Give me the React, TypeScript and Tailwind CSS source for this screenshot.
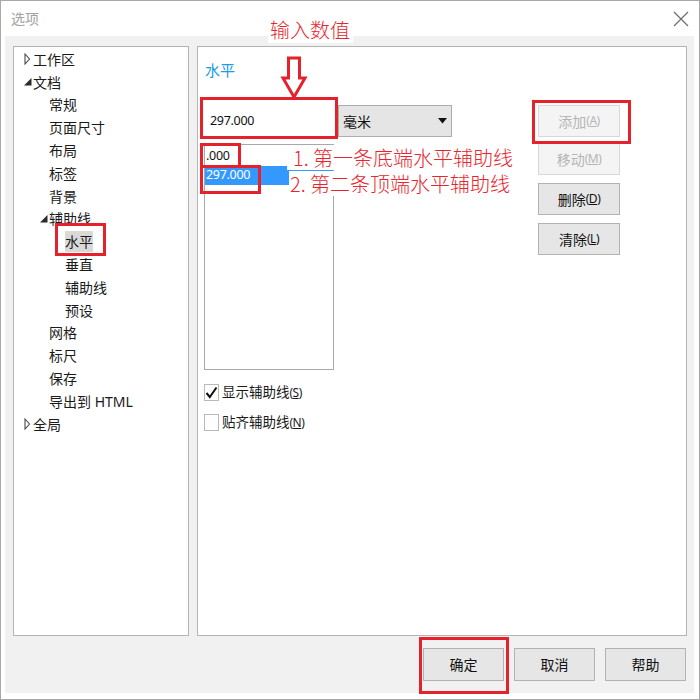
import React from 'react';

type TreeNode = {
  label: string;
  level: 0 | 1 | 2;
  icon?: 'closed' | 'open';
  selected?: boolean;
};

const tree: TreeNode[] = [
  { label: '工作区', level: 0, icon: 'closed' },
  { label: '文档', level: 0, icon: 'open' },
  { label: '常规', level: 1 },
  { label: '页面尺寸', level: 1 },
  { label: '布局', level: 1 },
  { label: '标签', level: 1 },
  { label: '背景', level: 1 },
  { label: '辅助线', level: 1, icon: 'open' },
  { label: '水平', level: 2, selected: true },
  { label: '垂直', level: 2 },
  { label: '辅助线', level: 2 },
  { label: '预设', level: 2 },
  { label: '网格', level: 1 },
  { label: '标尺', level: 1 },
  { label: '保存', level: 1 },
  { label: '导出到 HTML', level: 1 },
  { label: '全局', level: 0, icon: 'closed' },
];

const indent = ['pl-[10px]', 'pl-[26px]', 'pl-[42px]'];

const TreeIcon = ({ kind }: { kind?: 'closed' | 'open' }) => (
  <span className="w-[9px] h-[12px] flex items-center">
    {kind === 'closed' && (
      <svg width="7" height="12" viewBox="0 0 7 12">
        <polygon points="1,1 5.5,6 1,11" fill="none" stroke="#4a4a4a" strokeWidth="1.1" />
      </svg>
    )}
    {kind === 'open' && (
      <svg width="8" height="12" viewBox="0 0 8 12">
        <polygon points="7.5,2 7.5,9.5 0,9.5" fill="#2b2b2b" />
      </svg>
    )}
  </span>
);

const Btn = ({
  children,
  disabled,
  className = '',
}: {
  children: React.ReactNode;
  disabled?: boolean;
  className?: string;
}) => (
  <div
    className={`h-[32px] w-[82px] border flex items-center justify-center text-[14px] ${
      disabled
        ? 'bg-[#f4f4f4] border-[#d8d8d8] text-[#b4b4b4]'
        : 'bg-[#e6e6e6] border-[#b2b2b2] text-[#111]'
    } ${className}`}
  >
    {children}
  </div>
);

const Key = ({ k }: { k: string }) => (
  <span className="text-[12px] tracking-[-0.5px]">
    (<u>{k}</u>)
  </span>
);

const BottomBtn = ({ label }: { label: string }) => (
  <div className="w-[81px] h-[33px] bg-[#e6e6e6] border border-[#b2b2b2] flex items-center justify-center text-[14px] text-[#111]">
    {label}
  </div>
);

const App: React.FC = () => {
  return (
    <div className="relative w-[700px] h-[700px] font-['Noto_Sans','Noto_Sans_CJK_SC',sans-serif]">
      <div className="w-[700px] h-[700px] border border-[#a8a8a8] bg-white flex flex-col">
        {/* title bar */}
        <div className="h-[35px] flex items-center justify-between pl-[10px] pr-[10px]">
          <span className="text-[14px] text-[#a2a2a2]">选项</span>
          <svg width="16" height="16" viewBox="0 0 16 16">
            <path d="M1 1 L15 15 M15 1 L1 15" stroke="#6e6e6e" strokeWidth="1.3" />
          </svg>
        </div>

        {/* body */}
        <div className="ml-[4px] w-[689px] h-[657px] bg-[#f1f1f1] pt-[10px] pl-[8px] pr-[7px] flex flex-col">
          <div className="flex gap-[8px] h-[590px]">
            {/* tree */}
            <div className="w-[176px] h-[590px] bg-white border border-[#b4b4b4] pt-[1px]">
              {tree.map((n, i) => (
                <div
                  key={i}
                  className={`h-[22.8px] flex items-center ${indent[n.level]} text-[14px] text-[#1a1a1a]`}
                >
                  <TreeIcon kind={n.icon} />
                  <span className={n.selected ? 'bg-[#d9d9d9] leading-[21px]' : 'leading-[21px]'}>
                    {n.label}
                  </span>
                </div>
              ))}
            </div>

            {/* settings page */}
            <div className="w-[490px] h-[590px] bg-white border border-[#b4b4b4] pt-[13px] pl-[6px]">
              <div className="h-[20px] leading-[20px] pl-[1px] text-[15px] text-[#1c9be6]">水平</div>
              <div className="flex mt-[25px]">
                <div className="w-[248px]">
                  <div className="flex gap-[4px] h-[32px]">
                    <div className="w-[130px] h-[32px] bg-white flex items-center pl-[6px] text-[12.5px] tracking-[-0.3px] text-[#111]">
                      297.000
                    </div>
                    <div className="w-[114px] h-[32px] border border-[#adadad] bg-[#e5e5e5] flex items-center justify-between pl-[4px] pr-[4px] text-[14px] text-[#111]">
                      <span>毫米</span>
                      <svg width="9" height="6" viewBox="0 0 9 6">
                        <polygon points="0,0 9,0 4.5,5.5" fill="#111" />
                      </svg>
                    </div>
                  </div>
                  <div className="mt-[7px] w-[130px] h-[226px] border border-[#a9a9a9] pt-[2px] text-[12.5px] tracking-[-0.3px]">
                    <div className="h-[19px] flex items-center pl-[1px] text-[#111]">.000</div>
                    <div className="h-[19px] flex items-center pl-[1px] bg-[#3399ff] text-white">297.000</div>
                  </div>
                  <div className="mt-[13px] flex flex-col gap-[12px] text-[13.5px] text-[#1a1a1a]">
                    <div className="h-[18px] flex items-center gap-[3px]">
                      <span className="w-[15px] h-[17px] border border-[#b9b9b9] bg-white flex items-center justify-center">
                        <svg width="13" height="13" viewBox="0 0 13 13">
                          <path d="M1.5 7 L4.8 11 L11.5 1.5" fill="none" stroke="#111" strokeWidth="2" />
                        </svg>
                      </span>
                      <span>
                        显示辅助线
                        <Key k="S" />
                      </span>
                    </div>
                    <div className="h-[18px] flex items-center gap-[3px]">
                      <span className="w-[15px] h-[17px] border border-[#b9b9b9] bg-white" />
                      <span>
                        贴齐辅助线
                        <Key k="N" />
                      </span>
                    </div>
                  </div>
                </div>
                <div className="ml-[86px] flex flex-col">
                  <Btn disabled>
                    添加<Key k="A" />
                  </Btn>
                  <Btn disabled className="mt-[6px]">
                    移动<Key k="M" />
                  </Btn>
                  <Btn className="mt-[8px]">
                    删除<Key k="D" />
                  </Btn>
                  <Btn className="mt-[8px]">
                    清除<Key k="L" />
                  </Btn>
                </div>
              </div>
            </div>
          </div>

          {/* dialog buttons */}
          <div className="mt-[12px] flex justify-end gap-[10px] pr-[1px]">
            <BottomBtn label="确定" />
            <BottomBtn label="取消" />
            <BottomBtn label="帮助" />
          </div>
        </div>
      </div>

      {/* annotations drawn over the screenshot */}
      <div className="absolute left-[268px] top-[17px] w-[85px] h-[26px] bg-white pl-[2px] flex items-center leading-[22px] text-[20px] font-light text-[#e8252e] font-['Noto_Sans_CJK_SC',sans-serif]">
        输入数值
      </div>
      <svg className="absolute left-[280px] top-[56px]" width="28" height="44" viewBox="0 0 28 44">
        <polygon
          points="8.5,2 19.5,2 19.5,22 25,22 14,41 3,22 8.5,22"
          fill="white"
          stroke="#e5222b"
          strokeWidth="3"
        />
      </svg>
      <div className="absolute left-[200px] top-[97px] w-[138px] h-[42px] border-[3px] border-[#e5222b]" />
      <div className="absolute left-[287px] top-[145px] w-[226px] h-[25px] bg-white pl-[6px] flex items-center leading-[22px] text-[20px] font-light text-[#e8252e] font-['Noto_Sans_CJK_SC',sans-serif] whitespace-nowrap">
        1. 第一条底端水平辅助线
      </div>
      <div className="absolute left-[289px] top-[171px] w-[224px] h-[25px] bg-white pl-[1px] flex items-center leading-[22px] text-[20px] font-light text-[#e8252e] font-['Noto_Sans_CJK_SC',sans-serif] whitespace-nowrap">
        2. 第二条顶端水平辅助线
      </div>
      <div className="absolute left-[200px] top-[143px] w-[41px] h-[25px] border-[3px] border-[#e5222b]" />
      <div className="absolute left-[200px] top-[165px] w-[61px] h-[29px] border-[3px] border-[#e5222b]" />
      <div className="absolute left-[55px] top-[223px] w-[51px] h-[33px] border-[3px] border-[#e5222b]" />
      <div className="absolute left-[532px] top-[100px] w-[99px] h-[44px] border-[3px] border-[#e5222b]" />
      <div className="absolute left-[419px] top-[637px] w-[90px] h-[57px] border-[3px] border-[#e5222b]" />
    </div>
  );
};

export default App;
